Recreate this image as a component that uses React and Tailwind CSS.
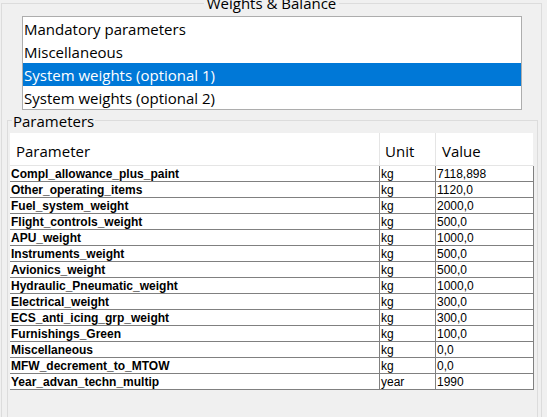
import React from 'react';

const sections = [
  'Mandatory parameters',
  'Miscellaneous',
  'System weights (optional 1)',
  'System weights (optional 2)',
];

const rows = [
  ['Compl_allowance_plus_paint', 'kg', '7118,898'],
  ['Other_operating_items', 'kg', '1120,0'],
  ['Fuel_system_weight', 'kg', '2000,0'],
  ['Flight_controls_weight', 'kg', '500,0'],
  ['APU_weight', 'kg', '1000,0'],
  ['Instruments_weight', 'kg', '500,0'],
  ['Avionics_weight', 'kg', '500,0'],
  ['Hydraulic_Pneumatic_weight', 'kg', '1000,0'],
  ['Electrical_weight', 'kg', '300,0'],
  ['ECS_anti_icing_grp_weight', 'kg', '300,0'],
  ['Furnishings_Green', 'kg', '100,0'],
  ['Miscellaneous', 'kg', '0,0'],
  ['MFW_decrement_to_MTOW', 'kg', '0,0'],
  ['Year_advan_techn_multip', 'year', '1990'],
];

const uiFont = "font-['Segoe_UI','Open_Sans',sans-serif]";
const gridFont = "font-['Liberation_Sans',Arial,sans-serif]";

export default function App() {
  const selected = 2;

  return (
    <div className={`w-[547px] h-[417px] overflow-hidden bg-[#f0f0f0] text-black ${uiFont}`}>
      {/* Weights & Balance group */}
      <div className="relative mt-[3px] ml-[1px] w-[541px] h-[430px] border border-[#dcdcdc]">
        <div className="absolute -top-[11px] left-0 right-0 flex justify-center">
          <span className="bg-[#f0f0f0] px-[3px] text-[15px] leading-[20px]">Weights &amp; Balance</span>
        </div>

        {/* section list */}
        <div className="mt-[12px] ml-[20px] w-[500px] border border-[#adadad] bg-white">
          {sections.map((s, i) => (
            <div
              key={s}
              className={`h-[23px] pl-[1px] text-[15px] leading-[24px] ${
                i === selected ? 'bg-[#0078d7] text-white' : ''
              }`}
            >
              {s}
            </div>
          ))}
        </div>

        {/* Parameters group */}
        <div className="relative mt-[10px] ml-[5px] w-[531px] h-[320px] border border-[#dcdcdc]">
          <span className="absolute -top-[10px] left-[4px] bg-[#f0f0f0] px-[1px] text-[15px] leading-[20px]">
            Parameters
          </span>

          <div className="mt-[12px] ml-[2px] w-[525px]">
            {/* header */}
            <div className="flex h-[33px] w-[523px] bg-white text-[15px] border-b border-[#e5e5e5]">
              <div className="w-[370px] pl-[6px] pt-[7px] border-r border-[#e5e5e5]">Parameter</div>
              <div className="w-[56px] pl-[5px] pt-[7px] border-r border-[#e5e5e5]">Unit</div>
              <div className="flex-1 pl-[6px] pt-[7px]">Value</div>
            </div>

            {/* body */}
            <div className={`w-[524px] bg-white border-r border-[#808080] ${gridFont} text-[12px]`}>
              {rows.map(([name, unit, value]) => (
                <div key={name} className="flex h-[16px] border-b border-[#808080] leading-[15px]">
                  <div className="w-[370px] pl-[1px] pt-[1px] font-bold border-r border-[#808080]">{name}</div>
                  <div className="w-[56px] pl-[1px] pt-[1px] border-r border-[#808080]">{unit}</div>
                  <div className="flex-1 pl-[1px] pt-[1px]">{value}</div>
                </div>
              ))}
            </div>
          </div>
        </div>
      </div>
    </div>
  );
}
